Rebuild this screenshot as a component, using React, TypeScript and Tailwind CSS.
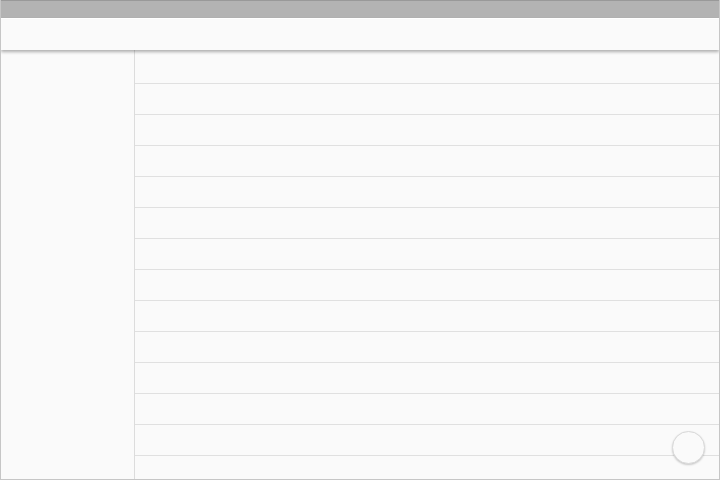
const rows = Array.from({ length: 14 }, (_, i) => i);

export default function App() {
  return (
    <div className="relative flex h-[480px] w-[720px] flex-col overflow-hidden border border-t-0 border-[#c6c6c6] bg-[#fafafa] font-['Roboto',sans-serif]">
      <div className="h-[18px] shrink-0 border-t border-[#999999] bg-[#b3b3b3]" />
      <div className="relative z-10 h-[32px] shrink-0 border-t border-[#ffffff] bg-[#fafafa] shadow-[0_2px_3px_rgba(0,0,0,0.3)]" />
      <div className="flex min-h-0 flex-1">
        <aside className="w-[134px] shrink-0 border-r border-[#dcdcdc] bg-[#fafafa]" />
        <main className="min-w-0 flex-1 pt-[3px]">
          {rows.map((i) => (
            <div key={i} className="h-[31px] border-b border-[#e0e0e0]" />
          ))}
        </main>
      </div>
      <button className="absolute left-[671px] top-[431px] h-[33px] w-[33px] rounded-full border border-[#d9d9d9] bg-[#fafafa] shadow-[0_1px_2px_rgba(0,0,0,0.2)]" />
    </div>
  );
}
